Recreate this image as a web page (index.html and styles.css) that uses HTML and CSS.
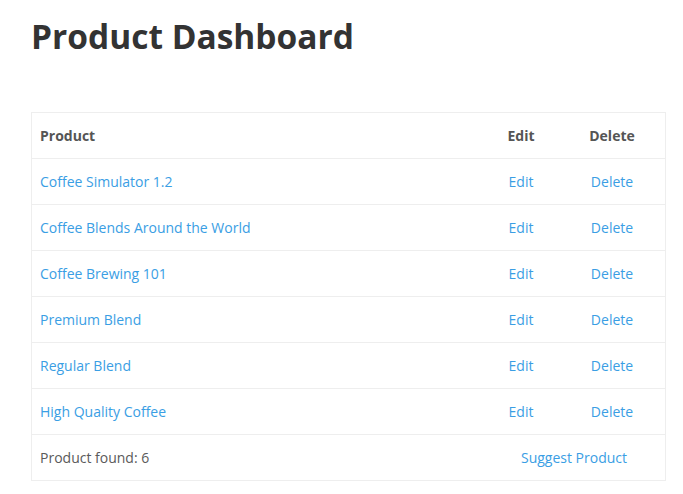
FILE: index.html
```html
<!DOCTYPE html>
<html>
<head>
<meta charset="utf-8">
<link rel="stylesheet" href="styles.css">
</head>
<body>
<div class="page">
  <h1 class="title">Product Dashboard</h1>
  <table class="products">
    <thead>
      <tr>
        <th class="col-name">Product</th>
        <th class="col-edit">Edit</th>
        <th class="col-delete">Delete</th>
      </tr>
    </thead>
    <tbody>
      <tr><td><a href="#">Coffee Simulator 1.2</a></td><td class="c"><a href="#">Edit</a></td><td class="c"><a href="#">Delete</a></td></tr>
      <tr><td><a href="#">Coffee Blends Around the World</a></td><td class="c"><a href="#">Edit</a></td><td class="c"><a href="#">Delete</a></td></tr>
      <tr><td><a href="#">Coffee Brewing 101</a></td><td class="c"><a href="#">Edit</a></td><td class="c"><a href="#">Delete</a></td></tr>
      <tr><td><a href="#">Premium Blend</a></td><td class="c"><a href="#">Edit</a></td><td class="c"><a href="#">Delete</a></td></tr>
      <tr><td><a href="#">Regular Blend</a></td><td class="c"><a href="#">Edit</a></td><td class="c"><a href="#">Delete</a></td></tr>
      <tr><td><a href="#">High Quality Coffee</a></td><td class="c"><a href="#">Edit</a></td><td class="c"><a href="#">Delete</a></td></tr>
    </tbody>
    <tfoot>
      <tr><td class="found">Product found: 6</td><td class="c" colspan="2"><a href="#">Suggest Product</a></td></tr>
    </tfoot>
  </table>
</div>
</body>
</html>
```
FILE: styles.css
```css
html, body {
  margin: 0;
  padding: 0;
  background: #fff;
}
body {
  font-family: "Open Sans", "Liberation Sans", sans-serif;
  color: #555;
}
.page {
  padding: 13px 18px 0 31px;
}
.title {
  margin: 0;
  font-size: 33.5px;
  font-weight: 700;
  color: #333;
  line-height: 46px;
}
.products {
  margin-top: 53px;
  width: 635px;
  border-collapse: collapse;
  border: 1px solid #eee;
  font-size: 14px;
}
.products th,
.products td {
  height: 45px;
  padding: 0 8px;
  border-top: 1px solid #eee;
  text-align: left;
  line-height: 20px;
}
.products th {
  font-weight: 700;
  color: #555;
}
.products .col-edit { width: 60px; text-align: center; }
.products .col-delete { width: 90px; text-align: center; }
.products td.c { text-align: center; }
.products a {
  color: #3a9ee4;
  text-decoration: none;
}
.found {
  color: #5a5a5a;
}
```
